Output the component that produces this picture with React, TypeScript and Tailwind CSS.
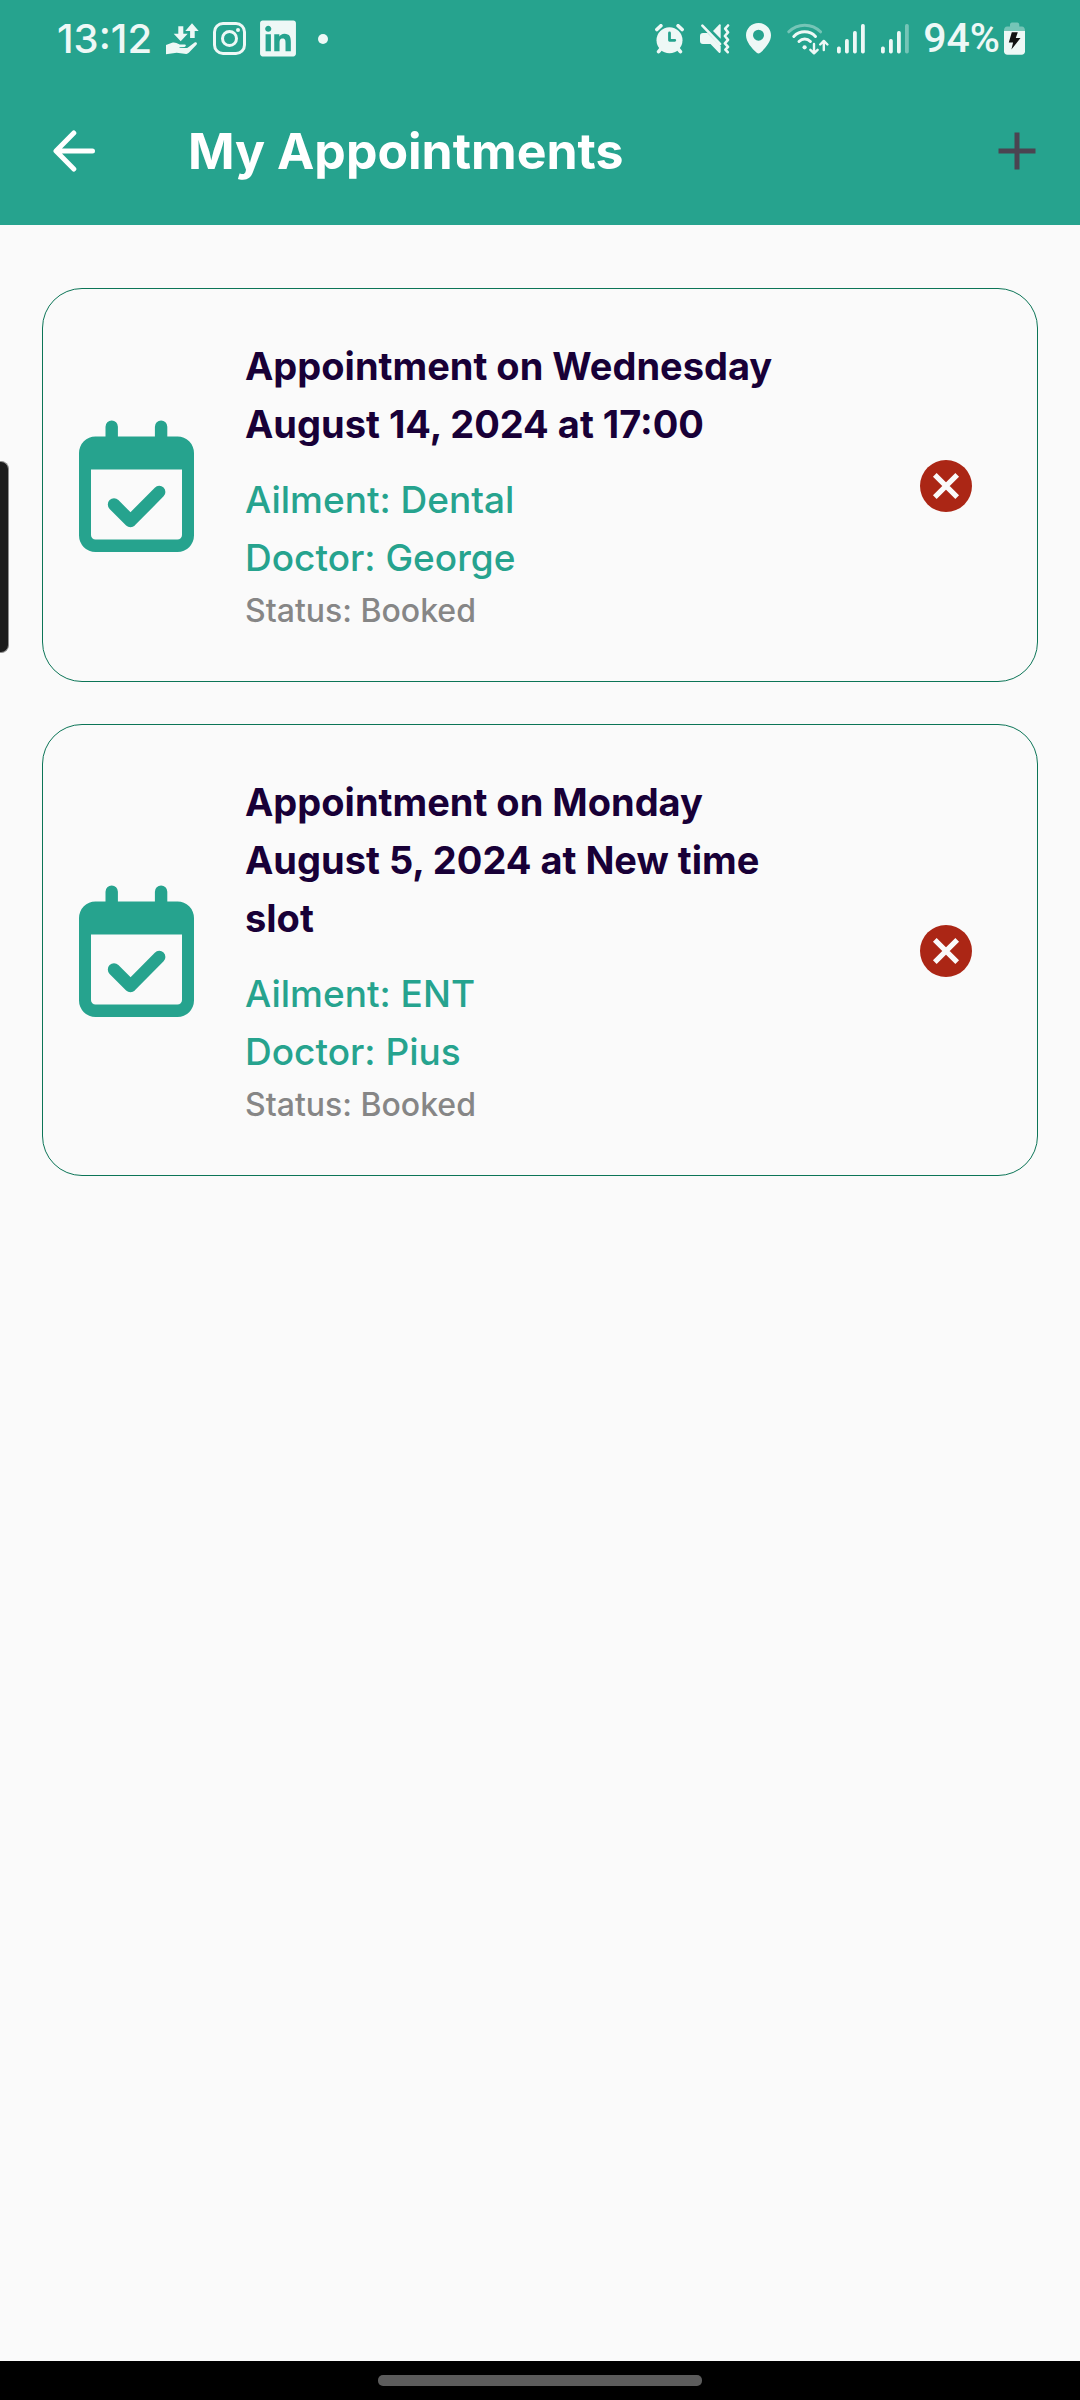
import { FaLinkedin } from 'react-icons/fa';

type Appointment = {
  title: string;
  ailment: string;
  doctor: string;
  status: string;
};

const appointments: Appointment[] = [
  {
    title: 'Appointment on Wednesday August 14, 2024 at 17:00',
    ailment: 'Dental',
    doctor: 'George',
    status: 'Booked',
  },
  {
    title: 'Appointment on Monday August 5, 2024 at New time slot',
    ailment: 'ENT',
    doctor: 'Pius',
    status: 'Booked',
  },
];

function TransferIcon() {
  return (
    <svg className="h-8 w-[33px]" viewBox="0 0 33 32" fill="currentColor" aria-hidden="true">
      <path d="M12.3 3.3h5v7.4h4.4l-7 7.6-7-7.6h4.6z" />
      <path d="M26 .3 32.7 8h-4V15h-4.6V8h-4.8z" />
      <path d="M0 22l6-2.2c1.6-.5 3-.3 4.400.3l3.300 1.500h5c1.500 0 1.700 2-.2 2.300l-5 .3v.9h6.400c1 0 1.600-.3 2.400-.9l6-4.500c1.800-1.200 3.600.3 2.200 2l-7 7.300c-1 1-1.900 1.900-3.300 1.900l-9.500-1.200L0 31.200z" />
    </svg>
  );
}

function InstagramIcon() {
  return (
    <svg className="size-[33px]" viewBox="0 0 33 33" fill="none" stroke="currentColor" strokeWidth="3" aria-hidden="true">
      <rect x="1.500" y="1.500" width="30" height="30" rx="8.500" />
      <circle cx="16.500" cy="16.500" r="7" />
      <circle cx="25" cy="8" r="2" fill="currentColor" stroke="none" />
    </svg>
  );
}

function AlarmIcon() {
  return (
    <svg className="h-[30px] w-[29px]" viewBox="0 0 29 30" fill="none" stroke="currentColor" strokeLinecap="round" aria-hidden="true">
      <circle cx="14.500" cy="16.300" r="13" fill="currentColor" stroke="none" />
      <path strokeWidth="3.600" d="M1.900 5.500l4-3.800M27.100 5.500l-4-3.800M3.600 27.600l3-3.600M25.400 27.600l-3-3.600" />
      <path stroke="#26a38e" strokeWidth="2.800" strokeLinejoin="round" d="M14.500 9v7.300h5.300" />
    </svg>
  );
}

function MuteVibrateIcon() {
  return (
    <svg className="h-[30px] w-[30px]" viewBox="0 0 30 30" fill="currentColor" aria-hidden="true">
      <path d="M13 7l6-6.300c.8-.8 1.700-.5 1.700.5v13.600z" />
      <path d="M3 9h4.500L20.700 22v5.500c0 1.500-1 1.800-2 .9L10.500 20H3c-2 0-3-1-3-3v-5c0-2 1-3 3-3z" />
      <path d="M2.400 1.700 20 20" stroke="currentColor" strokeWidth="2.600" strokeLinecap="round" />
      <path d="M28 1.500l-2.800 3.200 2.800 3.700-3.100 3.600 3.100 3.800-3.100 3.600 3.100 3.500-2.600 2.800 2.300 2.500" fill="none" stroke="currentColor" strokeWidth="2.600" strokeLinecap="round" strokeLinejoin="round" />
    </svg>
  );
}

function PinIcon() {
  return (
    <svg className="h-[31px] w-[25px]" viewBox="0 0 25 31" fill="currentColor" aria-hidden="true">
      <path fillRule="evenodd" d="M12.500 0C5.600 0 0 5.500 0 12.300c0 6.700 6 13.200 10.700 17.500 1.200 1 2.400 1 3.600 0C19 25.500 25 19 25 12.300 25 5.500 19.400 0 12.500 0zm0 6.700a5.500 5.500 0 1 1 0 11 5.500 5.500 0 0 1 0-11z" />
    </svg>
  );
}

function WifiIcon() {
  return (
    <svg className="h-8 w-[42px]" viewBox="0 0 42 32" fill="none" stroke="currentColor" strokeWidth="3" strokeLinecap="round" aria-hidden="true">
      <path opacity=".4" d="M1.800 8.800C10.500-.1 25-.1 33.500 8.800" />
      <path d="M6.800 13.500c6-6.200 15.700-6.200 21.700 0M12 18.500c3.200-3.200 8.200-3.200 11.400 0" />
      <circle cx="17.600" cy="24.300" r="2.100" fill="currentColor" stroke="none" />
      <path strokeWidth="2.400" strokeLinejoin="round" d="M27 21v9M23.400 26.800 27 30.300l3.600-3.500M36.800 27v-9M33.200 21.500l3.600-3.600 3.600 3.600" />
    </svg>
  );
}

function SignalIcon({ weak = false }: { weak?: boolean }) {
  return (
    <svg className="h-[30px] w-7" viewBox="0 0 28 30" fill="currentColor" aria-hidden="true">
      <rect x="0" y="22.500" width="3.800" height="7" rx="1.700" />
      <rect x="8" y="15" width="3.800" height="14.500" rx="1.700" />
      <rect x="16" y="7" width="3.800" height="22.500" rx="1.700" />
      <rect x="24" y="0" width="3.800" height="29.500" rx="1.700" opacity={weak ? 0.4 : 1} />
    </svg>
  );
}

function BatteryIcon() {
  return (
    <svg className="h-[33px] w-[21px]" viewBox="0 0 21 33" fill="currentColor" aria-hidden="true">
      <path opacity=".4" d="M6 4.500V3c0-1.500.7-2.400 2-2.400h5.300c1.300 0 2 .9 2 2.400v1.500h2.500C20 4.500 21 6 21 9H0c0-3 1-4.500 3.200-4.500z" />
      <path d="M0 9h21v20.200c0 2.300-1.300 3.500-3.500 3.500h-14C1.300 32.700 0 31.500 0 29.200z" />
      <path fill="#111" d="M7.800 10.300h6l-2 5.700h4.700L7.400 27.400l1.700-6.800H4.800z" />
    </svg>
  );
}

function CalendarCheckIcon() {
  return (
    <svg className="h-[132px] w-[115px] shrink-0 text-[#26a38e]" viewBox="0 0 115 132" fill="currentColor" aria-hidden="true">
      <path
        fillRule="evenodd"
        d="M26.500 16.500V6.700a6.200 6.200 0 0 1 12.400 0v9.800h37V6.700a6.200 6.200 0 0 1 12.400 0v9.800H98.500A16.500 16.500 0 0 1 115 33v82.500A16.500 16.500 0 0 1 98.500 132h-82A16.500 16.500 0 0 1 0 115.500V33a16.500 16.500 0 0 1 16.500-16.500zM12 49.500v65.500a4.500 4.500 0 0 0 4.500 4.500h82a4.500 4.500 0 0 0 4.500-4.500V49.500z"
      />
      <path d="M35 84.500 51.500 101 80.200 72" fill="none" stroke="currentColor" strokeWidth="12.400" strokeLinecap="round" strokeLinejoin="round" />
    </svg>
  );
}

function StatusBar() {
  return (
    <div className="flex h-[77px] items-center justify-between pr-[55px] pl-[57px] text-[#eef8f6]">
      <div className="flex items-center gap-[14px]">
        <span className="text-[40px] leading-none font-medium">13:12</span>
        <TransferIcon />
        <InstagramIcon />
        <FaLinkedin className="h-[41px] w-9" aria-hidden="true" />
        <span className="ml-2 size-2.5 rounded-full bg-current" />
      </div>
      <div className="flex items-center gap-4">
        <AlarmIcon />
        <MuteVibrateIcon />
        <PinIcon />
        <div className="flex items-center gap-2">
          <WifiIcon />
          <SignalIcon />
        </div>
        <div className="flex items-center gap-3.5">
          <SignalIcon weak />
          <div className="flex items-center gap-1">
            <span className="font-[Roboto,sans-serif] text-[41px] leading-none font-medium">94%</span>
            <BatteryIcon />
          </div>
        </div>
      </div>
    </div>
  );
}

function AppointmentCard({ title, ailment, doctor, status }: Appointment) {
  return (
    <li className="flex items-center rounded-[40px] border border-[#0c7557] pt-12 pr-[65px] pb-[46px] pl-9">
      <CalendarCheckIcon />
      <div className="ml-[51px] min-w-0 flex-1">
        <h2 className="text-[38px] leading-[58px] font-bold text-[#180037]">{title}</h2>
        <p className="mt-[18px] text-[37px] leading-[58px] font-medium text-[#26a38e]">Ailment: {ailment}</p>
        <p className="text-[37px] leading-[58px] font-medium text-[#26a38e]">Doctor: {doctor}</p>
        <p className="text-[32px] leading-[48px] font-medium text-[#868686]">Status: {status}</p>
      </div>
      <button type="button" aria-label="Cancel appointment" className="ml-[120px] shrink-0">
        <svg className="size-[52px]" viewBox="0 0 52 52" aria-hidden="true">
          <circle cx="26" cy="26" r="26" fill="#ab2615" />
          <path d="M14.800 14.800l22.400 22.400M37.200 14.800 14.800 37.200" stroke="#fafafa" strokeWidth="5.200" />
        </svg>
      </button>
    </li>
  );
}

export default function App() {
  return (
    <div className="relative flex min-h-screen flex-col bg-[#fafafa] font-[Inter,sans-serif]">
      <header className="bg-[#26a38e]">
        <StatusBar />
        <div className="flex h-[148px] items-center pr-[44px] pl-[53px]">
          <button type="button" aria-label="Back" className="text-white">
            <svg className="size-[42px]" viewBox="0 0 42 42" fill="none" stroke="currentColor" strokeWidth="5" strokeLinecap="round" strokeLinejoin="round" aria-hidden="true">
              <path d="M39.500 21H4M20.800 3 3 21l17.800 18" />
            </svg>
          </button>
          <h1 className="ml-[93px] flex-1 text-[50px] leading-none font-bold text-white">My Appointments</h1>
          <button type="button" aria-label="Add appointment" className="text-[#4b4451]">
            <svg className="size-[38px]" viewBox="0 0 38 38" fill="none" stroke="currentColor" strokeWidth="5" aria-hidden="true">
              <path d="M19 .5v37M.5 19h37" />
            </svg>
          </button>
        </div>
      </header>

      <main className="flex-1 px-[42px] pt-[63px]">
        <ul className="flex flex-col gap-[42px]">
          {appointments.map((appointment) => (
            <AppointmentCard key={appointment.title} {...appointment} />
          ))}
        </ul>
      </main>

      <div className="absolute top-[461px] left-0 h-48 w-[9px] rounded-r-lg border border-l-0 border-[#8f8f8f] bg-[#1c1c1c]" />

      <footer className="flex h-[39px] items-center justify-center bg-black">
        <div className="h-[11px] w-[30%] rounded-[5px] bg-[#5c5c5c]" />
      </footer>
    </div>
  );
}
